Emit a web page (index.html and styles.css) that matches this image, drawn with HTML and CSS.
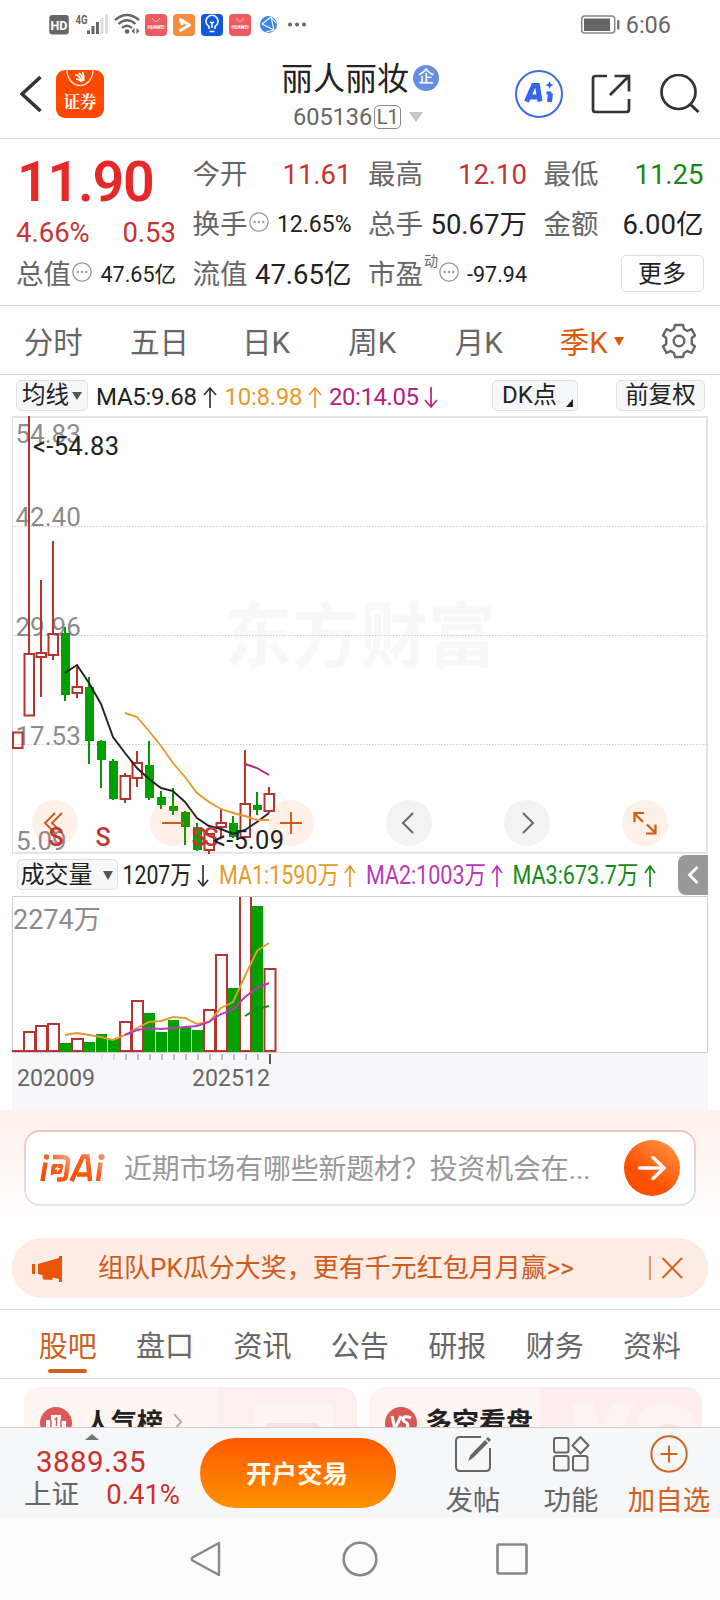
FILE: index.html
```html
<!DOCTYPE html>
<html lang="zh-CN">
<head>
<meta charset="utf-8">
<title>丽人丽妆 605136</title>
<link rel="stylesheet" href="styles.css">
</head>
<body>
<div class="screen">

<header class="status">
  <svg class="status-icons" width="260" height="26" viewBox="48 11 260 26">
    <rect x="49.3" y="15" width="19.5" height="19.5" rx="3" fill="#666"/>
    <text x="59" y="29.5" class="hd">HD</text>
    <text x="75.5" y="23.5" class="fourg" textLength="12" lengthAdjust="spacingAndGlyphs">4G</text>
    <g fill="#666"><rect x="87" y="30.5" width="3" height="3.5"/><rect x="91.5" y="26" width="3" height="8"/><rect x="96" y="22" width="3" height="12"/></g>
    <g fill="#ddd"><rect x="100.5" y="18" width="3" height="16"/><rect x="105" y="14" width="3" height="20"/></g>
    <g fill="none" stroke="#666" stroke-width="2.300"><path d="M115 20Q127 10 139 20"/><path d="M118.500 24Q127 16.500 135.500 24"/><path d="M122 28Q127 23.500 132 28"/></g>
    <circle cx="127" cy="31.5" r="2.300" fill="#666"/><path d="M134.500 28v6l-3-3zM136.500 34v-6l3 3z" fill="#666"/>
    <g id="shop"><rect x="145" y="14" width="22" height="22" rx="4" fill="#ee5a5f"/><path d="M152 18Q156 25 160 18" fill="none" stroke="#ffc5c0"/><text x="156" y="28.5" class="tiny" textLength="17" lengthAdjust="spacingAndGlyphs">HUAWEI</text></g>
    <rect x="173" y="14" width="22" height="22" rx="4" fill="#f58d3e"/><path d="M179.500 31l10-6-9-5.500 2 5.500" fill="none" stroke="#fff" stroke-width="3" stroke-linejoin="round"/>
    <rect x="201" y="14" width="22" height="22" rx="4" fill="#1358dc"/><path d="M209 29v-2.500a6 6 0 1 1 6 0V29M209.500 31.500h5M212 28v-5l-2-1m2 1 2-1" fill="none" stroke="#fff" stroke-width="1.500"/>
    <use href="#shop" x="84"/>
    <circle cx="268.500" cy="24.500" r="8.500" fill="#3b87e8"/><path d="M262 24l9-7 3 13-12-6M271 17l5 6M266 32l8-2" fill="none" stroke="#fff" stroke-width="1.100"/>
    <g fill="#666"><circle cx="290" cy="24.500" r="2"/><circle cx="297" cy="24.500" r="2"/><circle cx="304" cy="24.500" r="2"/></g>
  </svg>
  <div class="status-right">
    <svg width="40" height="20" viewBox="0 0 40 20"><rect x="1.700" y="1" width="33" height="17" rx="3" fill="none" stroke="#888" stroke-width="1.500"/><rect x="4" y="3.500" width="26" height="12.500" fill="#666"/><rect x="37" y="5" width="2.500" height="9.500" rx="1" fill="#777"/></svg>
    <span>6:06</span>
  </div>
</header>

<section class="head">
  <svg class="back" width="22" height="38" viewBox="0 0 22 38"><path d="M20.500 2 2 19l18.500 17" fill="none" stroke="#333" stroke-width="3.600"/></svg>
  <div class="broker"><svg width="28" height="17" viewBox="0 0 28 17"><path d="M1 0a13 15.500 0 0 0 26 0" fill="none" stroke="#ffd9c8" stroke-width="1.500"/><path d="M9 5q4-1 7 7M12.500 3q4 2 4.500 8M16.500 2q2 4 1 9M10 9q3 0 6 3" fill="none" stroke="#fff" stroke-width="1.700"/></svg><b>证券</b></div>
  <div class="title">
    <h1>丽人丽妆<i>企</i></h1>
    <div class="code">605136<em>L1</em><svg width="14" height="10"><path d="M0 0h14L7 10z" fill="#c8c8c8"/></svg></div>
  </div>
  <div class="actions">
    <svg width="48" height="48" viewBox="0 0 48 48"><circle cx="24" cy="24" r="23" fill="none" stroke="#4169e1" stroke-width="2"/><path d="M11.500 31.500 18.500 15.500h4L25 31.500M15 27h9M35.500 23.500 34.500 32" fill="none" stroke="#3763ee" stroke-width="5"/><path d="M31.500 23h5" stroke="#3763ee" stroke-width="3"/><path d="M34.500 11l1.200 2.800 2.800 1.200-2.800 1.200-1.200 2.800-1.200-2.800-2.800-1.200 2.800-1.200z" fill="#3763ee"/></svg>
    <svg width="40" height="40" viewBox="0 0 40 40"><path d="M16 2H4.500Q2 2 2 4.500v31Q2 38 4.500 38h31q2.500 0 2.500-2.500V25M23.500 2H38v15.500M38 2 19 21" fill="none" stroke="#333" stroke-width="2.700"/></svg>
    <svg width="40" height="40" viewBox="0 0 40 40"><circle cx="18.500" cy="18" r="17" fill="none" stroke="#333" stroke-width="2.700"/><path d="M30.500 30.500 38.500 38" stroke="#333" stroke-width="3"/></svg>
  </div>
</section>

<section class="quote">
  <div class="main">
    <div class="price">11.90</div>
    <div class="change"><span>4.66%</span><span>0.53</span></div>
    <div class="cell"><label>总值</label><svg class="dots"><use href="#more"/></svg><b class="s">47.65亿</b></div>
  </div>
  <div class="cell"><label>今开</label><b class="red">11.61</b></div>
  <div class="cell"><label>最高</label><b class="red">12.10</b></div>
  <div class="cell"><label>最低</label><b class="green">11.25</b></div>
  <div class="cell"><label>换手</label><svg class="dots"><use href="#more"/></svg><b class="m">12.65%</b></div>
  <div class="cell"><label>总手</label><b>50.67万</b></div>
  <div class="cell"><label>金额</label><b>6.00亿</b></div>
  <div class="cell"><label>流值</label><b>47.65亿</b></div>
  <div class="cell"><label>市盈</label><sup>动</sup><svg class="dots"><use href="#more"/></svg><b class="s">-97.94</b></div>
  <div class="cell"><button class="more">更多</button></div>
</section>
<svg class="defs"><symbol id="more" viewBox="0 0 20 20"><circle cx="10" cy="10" r="9.200" fill="none" stroke="#999" stroke-width="1.300"/><g fill="#999"><circle cx="5.700" cy="10" r="1.200"/><circle cx="10" cy="10" r="1.200"/><circle cx="14.300" cy="10" r="1.200"/></g></symbol></svg>

<nav class="periods">
  <span>分时</span><span>五日</span><span>日K</span><span>周K</span><span>月K</span>
  <span class="on">季K<svg width="10" height="9"><path d="M0 0h10L5 9z" fill="#dc5a0c"/></svg></span>
  <svg class="gear" width="36" height="36" viewBox="-18 -18 36 36"><path d="M-4-16H4L5-12 8.500-10 12.500-12 16-5.500 12.800-3v6L16 5.500 12.500 12 8.500 10 5 12 4 16H-4L-5 12-8.500 10-12.500 12-16 5.500-12.800 3v-6L-16-5.500-12.500-12-8.500-10-5-12z" fill="none" stroke="#666" stroke-width="2.400" stroke-linejoin="round"/><circle r="5.300" fill="none" stroke="#666" stroke-width="2.400"/></svg>
</nav>

<div class="ma-bar">
  <button class="chip ma">均线<svg width="10" height="8"><path d="M0 0h10L5 8z" fill="#555"/></svg></button>
  <svg class="ma-values" width="344" height="40" viewBox="96 375 344 40">
    <g class="ind">
      <text x="96" y="404" fill="#222" textLength="101">MA5:9.68</text>
      <text x="224.500" y="404" fill="#e79a2c" textLength="78">10:8.98</text>
      <text x="329" y="404" fill="#b6207f" textLength="90">20:14.05</text>
    </g>
    <g fill="none" stroke-width="1.700"><path d="M210 407v-20m-6 7 6-7 6 7" stroke="#333"/><path d="M315 407v-20m-6 7 6-7 6 7" stroke="#e79a2c"/><path d="M431 386v20m-6-7 6 7 6-7" stroke="#b6207f"/></g>
  </svg>
  <button class="chip dk">DK点<svg width="7" height="8"><path d="M7 0v8H0z" fill="#222"/></svg></button>
  <button class="chip fq">前复权</button>
</div>

<svg class="kline" width="720" height="438" viewBox="0 416 720 438">
  <g class="mark" fill="#f8f8f8"><text x="224" y="661" textLength="272" lengthAdjust="spacingAndGlyphs">东方财富</text></g>
  <path d="M12 526.500H707M12 635.500H707M12 744.500H707" stroke="#ccc" stroke-dasharray="1.500 1.500"/>
  <path d="M12.500 416V853" stroke="#ddd"/><path d="M12 417H707V852.800H12" fill="none" stroke="#e3e3e3" stroke-width="2"/>
  <g class="axis" fill="#8c8c8c"><text x="15.500" y="443">54.83</text><text x="15.500" y="526">42.40</text><text x="15.500" y="635.500">29.96</text><text x="15.500" y="744.500">17.53</text><text x="16" y="849.500">5.09</text></g>
  <!-- falling quarters -->
  <path d="M65 627v74M89 677v87M101 740v48M113 759v41M149 741v59M161 791v18M173 788v27M185 811v34M197 823v28M233 816v22M257 792v23" stroke="#00990a" stroke-width="2"/>
  <path d="M61 633h9v62h-9zM85 687h9v54h-9zM97 741h9v19h-9zM109 761h9v38h-9zM145 765h9v33h-9zM157 797h9v8h-9zM169 806h9v5h-9zM181 812h9v15h-9zM193 827h9v23h-9zM229 823h9v14h-9zM253 805h9v5h-9z" fill="#00a000"/>
  <!-- rising quarters -->
  <g fill="none" stroke="#b53431" stroke-width="2"><path d="M29 416v238M41 580v73M41 657v40M53 541v93M53 655v5M77 667v20M77 693v5M125 773v3M125 799v4M137 751v12M137 778v9M209 850v4M221 808v15M221 827v11M245 750v54M269 787v7M269 811v2"/>
  <path d="M13 732.500h9.500v15.500H13zM24.500 654h9.500v61.500h-9.500zM36.500 653h9.500v4h-9.500zM48.500 634h9.500v21h-9.500zM72.500 687h9.500v6h-9.500zM120.500 776h9.500v23h-9.500zM132.500 763h9.500v15h-9.500zM204.500 834h9.500v16h-9.500zM216.500 823h9.500v4h-9.500zM240.500 804h9.500v33h-9.500zM264.500 794h9.500v17h-9.500z"/></g>
  <g fill="none" stroke-width="1.900">
    <polyline stroke="#222" points="65,673 77,665 89,683 101,704 113,737 125,753 137,768 149,779 161,788 173,791 185,802 197,818 209,826 221,829 233,834 245,830 257,822 269,813"/>
    <polyline stroke="#e79a2c" points="125,713 137,717 149,731 161,746 173,763 185,777 197,793 209,802 221,809 233,813 245,816 257,820 269,820"/>
    <polyline stroke="#b6207f" points="245,764 257,768 269,775"/>
  </g>
  <g fill="#ff6a20" fill-opacity=".1"><circle cx="55" cy="823" r="23"/><circle cx="173" cy="823" r="23"/><circle cx="291" cy="823" r="23"/><circle cx="645" cy="823" r="23"/></g>
  <g fill="#f3f3f3"><circle cx="409" cy="823" r="23"/><circle cx="527" cy="823" r="23"/></g>
  <g fill="none" stroke="#cf5b1b" stroke-width="1.900"><path d="M55 813 45 823l10 10M62 813 52 823l10 10M162 823h22M280 823h22M291 812v22"/><path d="M634.500 822v-9H644m-9 1 8 8M655.500 824.500v9H646m9-1-8-8" stroke-width="2.200"/></g>
  <path d="M413 813 403 823l10 10M523 813l10 10-10 10" fill="none" stroke="#666" stroke-width="1.900"/>
  <g class="sell" fill="#c23633"><text x="56" y="845.500">S</text><text x="103" y="845.500">S</text><text x="199" y="845.500">S</text><text x="211" y="845.500">S</text></g>
  <g class="peak" fill="#222"><text x="33" y="454.500" textLength="86">&lt;-54.83</text><text x="213" y="848.500" textLength="71">&lt;-5.09</text></g>
</svg>

<div class="vol-bar">
  <button class="chip vol">成交量<svg width="10" height="9"><path d="M0 0h10L5 9z" fill="#555"/></svg></button>
  <svg width="540" height="42" viewBox="122 854 540 42">
    <g class="vind"><text x="122.500" y="884" fill="#222" textLength="69" lengthAdjust="spacingAndGlyphs">1207万</text>
    <text x="219" y="884" fill="#e79a2c" textLength="120" lengthAdjust="spacingAndGlyphs">MA1:1590万</text>
    <text x="366" y="884" fill="#bb38bb" textLength="120" lengthAdjust="spacingAndGlyphs">MA2:1003万</text>
    <text x="512.500" y="884" fill="#16891b" textLength="126" lengthAdjust="spacingAndGlyphs">MA3:673.7万</text></g>
    <g fill="none" stroke-width="1.700"><path d="M203 865v21m-5-6 5 6 5-6" stroke="#333"/><path d="M350 887v-21m-5 7 5-7 5 7" stroke="#e79a2c"/><path d="M497 887v-21m-5 7 5-7 5 7" stroke="#bb38bb"/><path d="M650 887v-21m-5 7 5-7 5 7" stroke="#16891b"/></g>
  </svg>
  <div class="fold"><svg width="12" height="20" viewBox="0 0 12 20"><path d="M10.500 2 2.500 10l8 8" fill="none" stroke="#fff" stroke-width="2.800"/></svg></div>
</div>

<svg class="volume" width="720" height="214" viewBox="0 896 720 214">
  <rect x="12" y="1052.500" width="696" height="58" fill="#f7f7fa"/>
  <rect x="12.500" y="896.500" width="695" height="156" fill="#fff" stroke="#ccc"/>
  <text x="13" y="929" class="volmax" fill="#8c8c8c">2274万</text>
  <path d="M60 1043h11v9H60zM84 1042h11v10H84zM96 1034h11v18H96zM108 1039h11v13h-11zM144 1013h11v39h-11zM156 1032h11v20h-11zM168 1020h11v32h-11zM180 1027h11v25h-11zM192 1030h11v22h-11zM228 988h11v64h-11zM252 906h11v146h-11z" fill="#00a000"/>
  <g fill="none" stroke="#b53431" stroke-width="2"><path d="M12 1051h12M24 1051v-19h11v19zM36 1051v-25h11v25zM48 1051v-27h11v27zM72 1051v-12h11v12zM120 1051v-29h11v29zM132 1051v-50h11v50zM204 1051v-41h11v41zM216 1051v-96h11v96zM240 897v154h11V897M264.500 1051v-82h11v82z"/></g>
  <g fill="none" stroke-width="1.900">
    <polyline stroke="#e79a2c" points="65,1035 77,1033 89,1035 101,1037 113,1040 125,1035 137,1028 149,1022 161,1021 173,1017 185,1018 197,1024 209,1022 221,1008 233,1002 245,976 257,951 269,943"/>
    <polyline stroke="#bb38bb" points="125,1035 137,1030 149,1028 161,1029 173,1028 185,1027 197,1026 209,1022 221,1014 233,1010 245,997 257,988 269,983"/>
    <polyline stroke="#16891b" points="245,1016 257,1009 269,1006"/>
  </g>
  <path d="M102 1054v6" stroke="#e4e4e6" stroke-width="1.500"/><path d="M114 1054v6" stroke="#ccc" stroke-width="1.500"/>
  <path d="M126 1054v6M138 1054v6M150 1054v6M162 1054v6M174 1054v6M186 1054v6M198 1054v6M210 1054v6M222 1054v6M234 1054v6M246 1054v6M258 1054v6" stroke="#aaa" stroke-width="1.500"/><path d="M270 1054v10" stroke="#444" stroke-width="1.800"/>
  <g class="dates" fill="#666"><text x="17" y="1086" textLength="78" lengthAdjust="spacingAndGlyphs">202009</text><text x="192" y="1086" textLength="78" lengthAdjust="spacingAndGlyphs">202512</text></g>
</svg>

<section class="ai">
  <div class="ask">
    <svg width="66" height="30" viewBox="0 0 66 30"><defs><linearGradient id="o" x1="0" y1="1" x2="1" y2="0"><stop stop-color="#f24b00"/><stop offset=".6" stop-color="#fb5f18"/><stop offset="1" stop-color="#f6a080"/></linearGradient></defs>
      <g fill="none" stroke="url(#o)" stroke-width="4.500"><path d="M5.500 9.500 2.500 28M13 4h9q7 0 6 5l-2 14q-.5 3.500-4 3.500h-5"/><path d="M31.500 28 43 3.500h4.500L50 28M37 21.500h13M60.500 9.500 58 28"/></g>
      <circle cx="6.500" cy="4" r="2.700" fill="#f0652c"/><circle cx="61.500" cy="4" r="3" fill="#ee8b6c"/>
      <path d="M13.500 11h8q2 0 1.500 2l-1 6q-.5 2-2.500 2h-5l-4 1.500 1-9q.5-2.500 2-2.500z" fill="#f45a18"/><path d="M18.500 12l-4 4.500h3l-1 3.500 4-5h-3z" fill="#fff"/></svg>
    <span>近期市场有哪些新题材？投资机会在...</span>
    <div class="go"><svg width="28" height="26" viewBox="0 0 28 26"><path d="M1.500 13H26M15 2.500 26 13 15 23.500" fill="none" stroke="#fff" stroke-width="3.500" stroke-linecap="round" stroke-linejoin="round"/></svg></div>
  </div>
</section>

<div class="banner">
  <svg width="31" height="27" viewBox="0 0 31 27"><path d="M0 9h3v10H0zM6 9l21-6V1h3v26h-3v-3l-6-1.500L20 25l-9-.5-.5-4.500-4.500-1z" fill="#ea5504"/></svg>
  <span>组队PK瓜分大奖，更有千元红包月月赢&gt;&gt;</span>
  <svg class="close" width="34" height="26" viewBox="0 0 34 26"><path d="M1 1v24" stroke="#cf6a30" stroke-width="1.300"/><path d="M13.500 3 33 23M33 3 13.500 23" stroke="#d4601d" stroke-width="2"/></svg>
</div>

<nav class="tabs"><span class="on">股吧</span><span>盘口</span><span>资讯</span><span>公告</span><span>研报</span><span>财务</span><span>资料</span></nav>

<section class="cards">
  <div class="card"><svg class="deco" width="139" height="60"><path d="M0 0h139v60H0z" fill="#fdefed"/><path d="M36 18h79v42H36z" fill="#fdf5f3"/><path d="M49 36h51v24H49z" fill="#f9e2df"/></svg>
    <svg width="32" height="32" viewBox="0 0 32 32"><circle cx="16" cy="16" r="16" fill="#dd5957"/><path d="M6 13h5V8h10v6h5v10H6z" fill="#fff"/><path d="M11 13v9M21 13v9M14.500 12.500 16.500 11v8" stroke="#dd5957" fill="none" stroke-width="1.500"/></svg><b>人气榜</b><svg width="10" height="18"><path d="M1 1l7 8-7 8" fill="none" stroke="#aaa" stroke-width="1.800"/></svg></div>
  <div class="card"><svg class="deco" width="162" height="60"><path d="M0 0h162v60H0z" fill="#fdedeb"/><path d="M31 16h22l7 25 13-25h22L72 60H40zM98 60V32q4-16 27-16 24 0 32 20v24z" fill="#fdf4f2"/><path d="M111 60q0-23 18-23 19 0 18 23z" fill="#fbe6e3"/></svg>
    <svg width="32" height="32" viewBox="0 0 32 32"><circle cx="16" cy="16" r="16" fill="#d95754"/><path d="M7 9l3 13 6-13M26 11q-7-3-8 1 0 2 3 3.500t1 5q-3 3-7 0" fill="none" stroke="#fff" stroke-width="3"/></svg><b>多空看盘</b></div>
</section>

<footer class="bottom">
  <div class="index"><svg width="14" height="6"><path d="M0 6 7 0l7 6z" fill="#777"/></svg><strong>3889.35</strong><p><span>上证</span><em>0.41%</em></p></div>
  <button class="trade">开户交易</button>
  <div class="tool"><svg width="38" height="38" viewBox="0 0 38 38"><path d="M27 2H6Q2 2 2 6v26q0 4 4 4h26q4 0 4-4V13" fill="none" stroke="#666" stroke-width="2"/><path d="M31 5 34 8 19 23l-5 3 2.500-6z" fill="#666"/><path d="M32 4l2-2 3 3-2 2z" fill="#666"/></svg><span>发帖</span></div>
  <div class="tool"><svg width="38" height="38" viewBox="0 0 38 38"><g fill="none" stroke="#666" stroke-width="2"><rect x="2" y="3" width="14.500" height="14.500" rx="2"/><rect x="2" y="21" width="14.500" height="14.500" rx="2"/><rect x="21" y="21" width="14.500" height="14.500" rx="2"/><path d="M28.500 2 36.500 10.500l-8 8-8-8z" stroke-linejoin="round"/></g></svg><span>功能</span></div>
  <div class="tool add"><svg width="38" height="38" viewBox="0 0 38 38"><circle cx="19" cy="19" r="17.700" fill="none" stroke="#d4601d" stroke-width="1.900"/><path d="M10.500 19h17M19 10.500v17" stroke="#d4601d" stroke-width="1.900"/></svg><span>加自选</span></div>
</footer>

<nav class="system">
  <svg width="32" height="36" viewBox="0 0 32 36"><path d="M29 2v32L2.500 19.500Q1 18 2.500 16.500z" fill="none" stroke="#888" stroke-width="2.400" stroke-linejoin="round"/></svg>
  <svg width="36" height="36"><circle cx="18" cy="18" r="16.300" fill="none" stroke="#888" stroke-width="2.600"/></svg>
  <svg width="32" height="32"><rect x="1.500" y="1.500" width="29" height="29" rx="1.500" fill="none" stroke="#888" stroke-width="2.600"/></svg>
</nav>
</div>
</body>
</html>
```
FILE: styles.css
```css
* { box-sizing: border-box; }
body { margin: 0; background: #fff; font-family: Roboto, "Noto Sans CJK SC", sans-serif; color: #666; }
h1, p { margin: 0; }
i, em { font-style: normal; }
svg { display: block; flex: none; }
button { font: inherit; padding: 0; margin: 0; }
.screen { width: 720px; height: 1600px; overflow: hidden; display: flex; flex-direction: column; }
.screen > * { flex: none; }
.defs { width: 0; height: 0; position: absolute; }

.status { height: 50px; display: flex; justify-content: space-between; padding: 11px 49px 0 48px; }
.hd { font: bold 12.500px Roboto; fill: #fff; text-anchor: middle; }
.fourg { font: bold 13px Roboto; fill: #666; }
.tiny { font: bold 5px Roboto; fill: #fff; text-anchor: middle; }
.status-right { display: flex; gap: 6px; font-size: 23.500px; line-height: 28px; }
.status-right svg { margin-top: 4px; }

.head { height: 89px; border-bottom: 1px solid #d4d4d4; display: flex; align-items: flex-start; padding-left: 20px; }
.back { margin-top: 25px; }
.broker { width: 48px; height: 48px; margin: 20px 0 0 14px; border-radius: 9px; background: #ff4800; color: #fff; display: flex; flex-direction: column; align-items: center; font-family: "Noto Serif CJK SC", "Noto Sans CJK SC", sans-serif; font-size: 16.500px; line-height: 29px; }
.title { margin-left: 177px; width: 161px; }
.title h1 { display: flex; align-items: center; font-weight: 400; font-size: 32px; line-height: 46px; margin-top: 6px; color: #222; white-space: nowrap; }
.title i { width: 26px; height: 26px; border-radius: 50%; background: #658de2; color: #fff; font-size: 16px; line-height: 24px; font-weight: 500; text-align: center; margin: -2px 0 0 4px; }
.code { display: flex; align-items: center; margin: 2px 0 0 12px; font-size: 23.500px; line-height: 26px; }
.code em { width: 27px; height: 24px; border: 1.500px solid #888; border-radius: 5px; font-size: 20px; line-height: 22px; text-align: center; margin: 0 8px 0 2px; }
.actions { display: flex; align-items: center; margin: 20px 0 0 73px; gap: 28px; }
.actions svg + svg + svg { margin-left: 1px; }

.quote { height: 167px; border-bottom: 1px solid #d4d4d4; padding: 11px 16px 0; display: grid; grid-template-columns: 160px 159px 159px 160px; column-gap: 16.500px; grid-template-rows: 50px 50px 50px; justify-content: start; }
.main { grid-row: 1 / 4; display: grid; grid-template-rows: 65px 35px 50px; }
.price { font-size: 55.500px; font-weight: 600; line-height: 65px; color: #e62828; letter-spacing: -1.200px; padding-left: 1px; }
.change { display: flex; justify-content: space-between; font-size: 27.500px; line-height: 35px; color: #c53434; }
.cell { display: flex; align-items: center; font-size: 27.500px; line-height: 50px; white-space: nowrap; }
.cell b { margin-left: auto; font-weight: 400; color: #222; }
.cell .red { color: #c53434; }
.cell .green { color: #148716; }
.cell .s { font-size: 21.500px; }
.cell .m { font-size: 23px; }
.dots { width: 20px; height: 20px; margin: -7px 0 0 1px; }
.cell sup { font-size: 14px; line-height: 16px; margin: -28px 0 0 1px; }
.cell .more { margin: -3px 0 0 auto; width: 83px; height: 37px; border: 1.500px solid #ddd; border-radius: 5px; background: #fff; color: #222; font-size: 24px; line-height: 32px; }

.periods { height: 69px; border-bottom: 1px solid #d4d4d4; display: grid; grid-template-columns: repeat(6, 106.400px) 82px; align-items: center; justify-items: center; font-size: 29.500px; line-height: 66px; }
.periods span { padding-top: 4px; }
.periods .on { color: #dc5a0c; display: flex; align-items: center; gap: 6px; padding-left: 13px; }
.periods .on svg { margin-top: -4px; }
.gear { justify-self: start; margin-left: 23px; }

.ma-bar { height: 41px; display: flex; align-items: center; padding-left: 16px; }
.ma-values { margin-left: 8px; }
.chip { height: 31px; border: 1.500px solid #dfe1e5; border-radius: 5px; background: #f6f7f9; color: #222; font-size: 24px; line-height: 27px; display: flex; align-items: center; justify-content: center; white-space: nowrap; }
.ma { width: 72px; gap: 3px; font-size: 23.500px; }
.dk { width: 86px; margin-left: 52px; gap: 9px; padding-left: 5px; }
.dk svg { margin-top: 14px; }
.fq { width: 89px; margin-left: 38px; font-size: 23.500px; }
.ind { font-size: 24px; }
.vind { font-size: 25.500px; }
.axis { font-size: 26px; }
.peak { font-size: 25.500px; }
.sell { font-size: 25px; font-weight: 500; text-anchor: middle; }
.mark { font-size: 71px; font-weight: 700; }

.vol-bar { height: 42px; display: flex; padding-left: 17px; }
.vol { width: 101px; margin: 5px 4px 0 0; gap: 10px; padding: 1px 2px 0 0; }
.fold { margin: 1px 0 0 16px; width: 30px; height: 40px; border-radius: 8px 0 0 8px; background: #999; display: flex; align-items: center; justify-content: center; }
.volmax { font-size: 27px; }
.dates { font-size: 24px; }

.ai { height: 128px; padding: 20px 24px; background: linear-gradient(#fff1ec, #fff 90%); }
.ask { height: 76px; border: 2px solid transparent; border-radius: 16px; background: linear-gradient(#fff, #fff) padding-box, linear-gradient(#f3c5be, #dfe5f3) border-box; display: flex; align-items: center; padding: 0 14px; font-size: 27.900px; color: #999; white-space: nowrap; }
.ask span { margin: 4px 0 0 18px; line-height: 70px; letter-spacing: -.1px; }
.go { margin-left: auto; width: 56px; height: 56px; border-radius: 50%; background: linear-gradient(35deg, #ff5000 35%, #ff9a4a); display: flex; align-items: center; justify-content: center; }

.banner { height: 60px; margin: 0 12px 11px; border-radius: 30px; background: #fcece4; color: #cf5b1b; display: flex; align-items: center; padding: 0 25px 0 20px; font-size: 26px; line-height: 60px; white-space: nowrap; }
.banner span { margin-left: 35px; }
.close { margin-left: auto; }

.tabs { height: 70px; border-top: 1px solid #d4d4d4; border-bottom: 1px solid #d4d4d4; display: grid; grid-template-columns: repeat(7, 97.400px); padding-left: 19px; font-size: 29px; line-height: 74px; text-align: center; }
.tabs .on { color: #cd6220; position: relative; }
.tabs .on::after { content: ""; position: absolute; left: 29px; top: 59px; width: 39px; height: 4px; border-radius: 2px; background: #cd6220; }

.cards { height: 48px; overflow: hidden; padding: 8px 18px 0 24px; display: grid; grid-template-columns: 333px 333px; column-gap: 12px; }
.card { height: 80px; border-radius: 16px; overflow: hidden; background: #fef4f2; display: flex; align-items: flex-start; padding: 20px 0 0 16px; position: relative; color: #222; }
.card b { font-size: 26px; line-height: 32px; margin: 0 10px 0 13px; position: relative; }
.card + .card b { margin-left: 8px; font-size: 27px; }
.card > svg { position: relative; }
.card b + svg { margin-top: 6px; }
.card .deco { position: absolute; right: 0; top: 0; }

.bottom { height: 91px; border-top: 1px solid #ccc; background: #f6f7f9; display: flex; padding-left: 16px; }
.index { width: 168px; color: #c93030; display: flex; flex-direction: column; }
.index > svg { margin: 6px 0 0 69px; }
.index strong { font-weight: 400; font-size: 29.500px; line-height: 32px; margin: 6px 0 0 20px; letter-spacing: .4px; }
.index p { display: flex; justify-content: space-between; font-size: 27.500px; line-height: 34px; padding: 0 4px 0 8px; }
.index p span { color: #666; }
.trade { width: 196px; height: 70px; margin: 10px 24px 0 16px; border: 0; border-radius: 35px; background: linear-gradient(#ff5900, #ff9100); color: #fffbea; font-size: 25.500px; font-weight: 700; padding: 0 2px 3px 0; }
.tool { width: 98px; margin-left: 4px; display: flex; flex-direction: column; align-items: center; font-size: 27.500px; white-space: nowrap; }
.tool + .tool { margin-left: 0; }
.tool svg { margin-top: 7px; }
.tool span { line-height: 36px; margin-top: 10px; }
.add { color: #d4601d; }

.system { height: 82px; background: #fcfcfc; display: flex; align-items: center; padding-left: 190px; }
.system svg:nth-child(2) { margin: 0 118px 0 120px; }
```
